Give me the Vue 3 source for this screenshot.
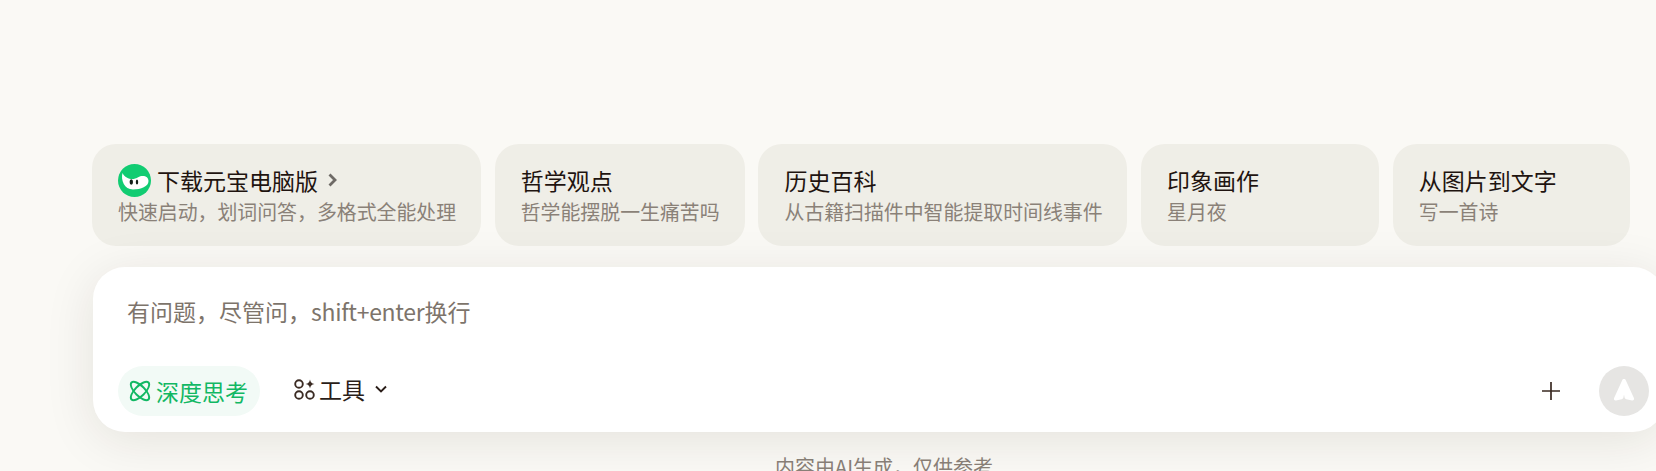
<script setup>
const cards = [
  { title: '哲学观点', sub: '哲学能摆脱一生痛苦吗', w: 250 },
  { title: '历史百科', sub: '从古籍扫描件中智能提取时间线事件', w: 369 },
  { title: '印象画作', sub: '星月夜', w: 238 },
  { title: '从图片到文字', sub: '写一首诗', w: 237 }
]
</script>

<template>
  <div class="page">
    <div class="cards">
      <div class="card first">
        <div class="title">
          <svg class="logo" viewBox="0 0 33 33" width="33" height="33">
            <circle cx="16.5" cy="16.5" r="16.5" fill="#11cc72" />
            <path d="M4.500 9C2.500 16 6.500 25.500 15 25.500c8 0 15.500-3 15.500-8.500 0-3.500-3-5.500-7-5-3.500.5-5 3-9 3-4 0-8-2-10-6z" fill="#fff" />
            <ellipse cx="13.300" cy="18" rx="1.700" ry="2.800" fill="#14201a" />
            <ellipse cx="19" cy="18" rx="1.200" ry="2.500" fill="#14201a" />
          </svg>
          <span>下载元宝电脑版</span>
          <svg class="arrow" viewBox="0 0 10 14" width="10" height="14">
            <path d="M1.500 1.500L7 7l-5.500 5.500" fill="none" stroke="#6e6a66" stroke-width="2.800" />
          </svg>
        </div>
        <div class="sub">快速启动，划词问答，多格式全能处理</div>
      </div>
      <div v-for="c in cards" :key="c.title" class="card" :style="{ width: c.w + 'px' }">
        <div class="title">{{ c.title }}</div>
        <div class="sub">{{ c.sub }}</div>
      </div>
    </div>

    <div class="box">
      <div class="placeholder">有问题，尽管问，<span class="latin">shift+enter</span>换行</div>
      <div class="actions">
        <div class="think">
          <svg viewBox="0 0 20 20" width="20" height="20" fill="none" stroke="#12b864" stroke-width="1.900">
            <ellipse cx="10" cy="10" rx="5" ry="12" transform="rotate(45 10 10)" />
            <ellipse cx="10" cy="10" rx="5" ry="12" transform="rotate(-45 10 10)" />
          </svg>
          <span>深度思考</span>
        </div>
        <div class="tools">
          <svg viewBox="0 0 21 21" width="21" height="21" fill="none" stroke="#3a2a22" stroke-width="1.900">
            <circle cx="5" cy="5" r="3.800" />
            <circle cx="5" cy="16" r="3.800" />
            <circle cx="16" cy="16" r="3.800" />
            <path d="M16 .5c.5 2.800 1.500 3.900 4.500 4.500-3 .6-4 1.700-4.500 4.500-.5-2.800-1.500-3.900-4.500-4.500 3-.6 4-1.700 4.500-4.500z" fill="#3a2a22" stroke="none" />
          </svg>
          <span>工具</span>
          <svg class="chev" viewBox="0 0 12 8" width="12" height="8">
            <path d="M1 1.500l5 5 5-5" fill="none" stroke="#2a1d18" stroke-width="1.900" />
          </svg>
        </div>
        <div class="spacer"></div>
        <svg class="plus" viewBox="0 0 18 18" width="18" height="18">
          <path d="M9 0v18M0 9h18" stroke="#3a2a22" stroke-width="1.700" />
        </svg>
        <div class="send">
          <svg viewBox="0 0 22 22" width="22" height="22">
            <path d="M11 0c.9 0 1.500.5 1.900 1.400l8 17.600c.6 1.400-.4 2.700-1.900 2.400l-5.700-1.200c-.9-.2-1.500-.9-1.700-1.700L11 15.500l-.600 3c-.2.800-.8 1.500-1.700 1.700L3 21.400c-1.500.3-2.500-1-1.900-2.400l8-17.600C9.500.5 10.100 0 11 0z" fill="#fff" />
          </svg>
        </div>
      </div>
    </div>

    <div class="foot">内容由AI生成，仅供参考</div>
  </div>
</template>

<style>
html, body {
  margin: 0;
  background: #faf9f5;
  overflow: hidden;
}
</style>

<style scoped>
.page {
  width: 1656px;
  height: 471px;
  overflow: hidden;
  box-sizing: border-box;
  padding: 144px 0 0 92px;
  background: #faf9f5;
  font-family: "Noto Sans CJK SC", "Noto Sans", sans-serif;
}
.cards {
  display: flex;
  gap: 13.700px;
  width: 1540px;
}
.card {
  box-sizing: border-box;
  height: 102px;
  flex: none;
  padding: 20px 0 0 26px;
  border-radius: 24px;
  background: #efeee7;
}
.first {
  width: 389px;
}
.title {
  display: flex;
  align-items: center;
  gap: 6px;
  height: 32px;
  font-size: 23px;
  line-height: 32px;
  color: #1f1410;
  white-space: nowrap;
}
.logo {
  flex: none;
}
.arrow {
  margin-left: 4px;
}
.sub {
  height: 28px;
  margin-top: 2px;
  font-size: 19.900px;
  line-height: 28px;
  color: #8a8178;
  white-space: nowrap;
}
.box {
  position: relative;
  box-sizing: border-box;
  width: 1572px;
  height: 165px;
  margin: 21px 0 0 1px;
  padding: 28px 16px 0 34px;
  border-radius: 32px;
  background: #fff;
  box-shadow: 0 8px 50px rgba(40, 30, 10, 0.1);
}
.placeholder {
  font-size: 23px;
  line-height: 32px;
  color: #7d746b;
}
.latin {
  letter-spacing: -0.300px;
}
.actions {
  display: flex;
  align-items: center;
  height: 50px;
  margin: 39px 0 0 -9px;
}
.think {
  display: flex;
  align-items: center;
  gap: 6px;
  box-sizing: border-box;
  width: 142px;
  height: 50px;
  padding: 0 12px;
  border-radius: 25px;
  background: #f2faf6;
  color: #12b864;
  font-size: 23px;
  white-space: nowrap;
}
.think svg {
  flex: none;
  overflow: visible;
}
.tools {
  display: flex;
  align-items: center;
  gap: 4px;
  margin: -4px 0 0 34px;
  color: #2a1d18;
  font-size: 23px;
}
.chev {
  margin-left: 6px;
}
.spacer {
  flex: 1;
}
.send {
  display: flex;
  align-items: center;
  justify-content: center;
  width: 50px;
  height: 50px;
  margin-left: 39px;
  border-radius: 50%;
  background: #e6e5e3;
}
.send svg {
  margin-top: -2px;
}
.foot {
  width: 1584px;
  margin-top: 21px;
  text-align: center;
  font-size: 20px;
  line-height: 28px;
  color: #8a8178;
}
</style>
